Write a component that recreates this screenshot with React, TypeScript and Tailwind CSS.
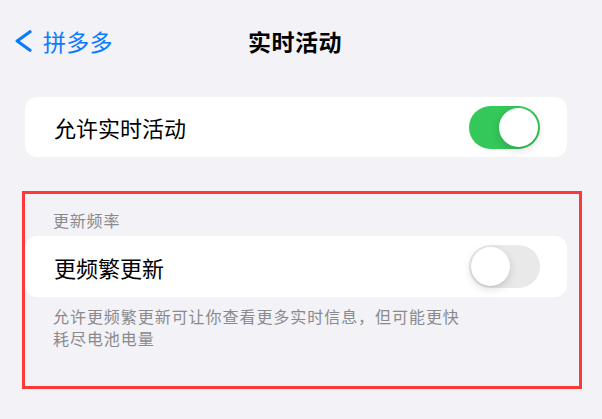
import React, { useState } from 'react';

const cjk = { fontFamily: '"Noto Sans CJK SC", "Noto Sans", sans-serif' };

function Toggle({ on, onClick }: { on: boolean; onClick: () => void }) {
  return (
    <button
      onClick={onClick}
      className={`relative w-[71px] h-[43px] rounded-full flex items-center px-[2px] transition-colors ${
        on ? 'bg-[#34c759] justify-end' : 'bg-[#e9e9ea] justify-start'
      }`}
    >
      <span className="w-[39px] h-[39px] rounded-full bg-white shadow-[0_3px_8px_rgba(0,0,0,0.15),0_1px_1px_rgba(0,0,0,0.06)]" />
    </button>
  );
}

export default function App() {
  const [live, setLive] = useState(true);
  const [frequent, setFrequent] = useState(false);

  return (
    <div className="relative w-full h-[419px] bg-[#f2f2f7] overflow-hidden" style={cjk}>
      {/* nav bar */}
      <div className="h-[82px] flex items-center pl-[15px]">
        <svg width="17" height="22" viewBox="0 0 17 22" className="text-[#0a7aff]">
          <path
            d="M15 1.8 L2.2 11 L15 20.2"
            fill="none"
            stroke="currentColor"
            strokeWidth="3.2"
            strokeLinecap="round"
            strokeLinejoin="round"
          />
        </svg>
        <span className="ml-[11px] text-[23px] leading-none text-[#0a7aff] tracking-[0.3px]">拼多多</span>
        <span className="ml-[135px] text-[23px] leading-none font-semibold text-black tracking-[0.5px]">
          实时活动
        </span>
      </div>

      <div className="mt-[15px] ml-[25px] mr-[35px] h-[60px] bg-white rounded-[12px] flex items-center justify-between pl-[29px] pr-[27px]">
        <span className="text-[22px] leading-none text-black">允许实时活动</span>
        <Toggle on={live} onClick={() => setLive(!live)} />
      </div>

      <div className="mt-[52px] ml-[53px] h-[22px] text-[16px] leading-[22px] text-[#8a8a8e] tracking-[0.8px]">
        更新频率
      </div>

      <div className="mt-[5px] ml-[25px] mr-[35px] h-[61px] bg-white rounded-[12px] flex items-center justify-between pl-[29px] pr-[27px]">
        <span className="text-[22px] leading-none text-black">更频繁更新</span>
        <Toggle on={frequent} onClick={() => setFrequent(!frequent)} />
      </div>

      <div className="mt-[8px] ml-[53px] text-[16px] leading-[22px] text-[#8a8a8e] tracking-[0.95px]">
        <div>允许更频繁更新可让你查看更多实时信息，但可能更快</div>
        <div>耗尽电池电量</div>
      </div>

      {/* annotation box */}
      <div className="absolute left-[22px] top-[191px] w-[560px] h-[198px] border-[3px] border-[#fc3a3a] pointer-events-none" />
    </div>
  );
}
